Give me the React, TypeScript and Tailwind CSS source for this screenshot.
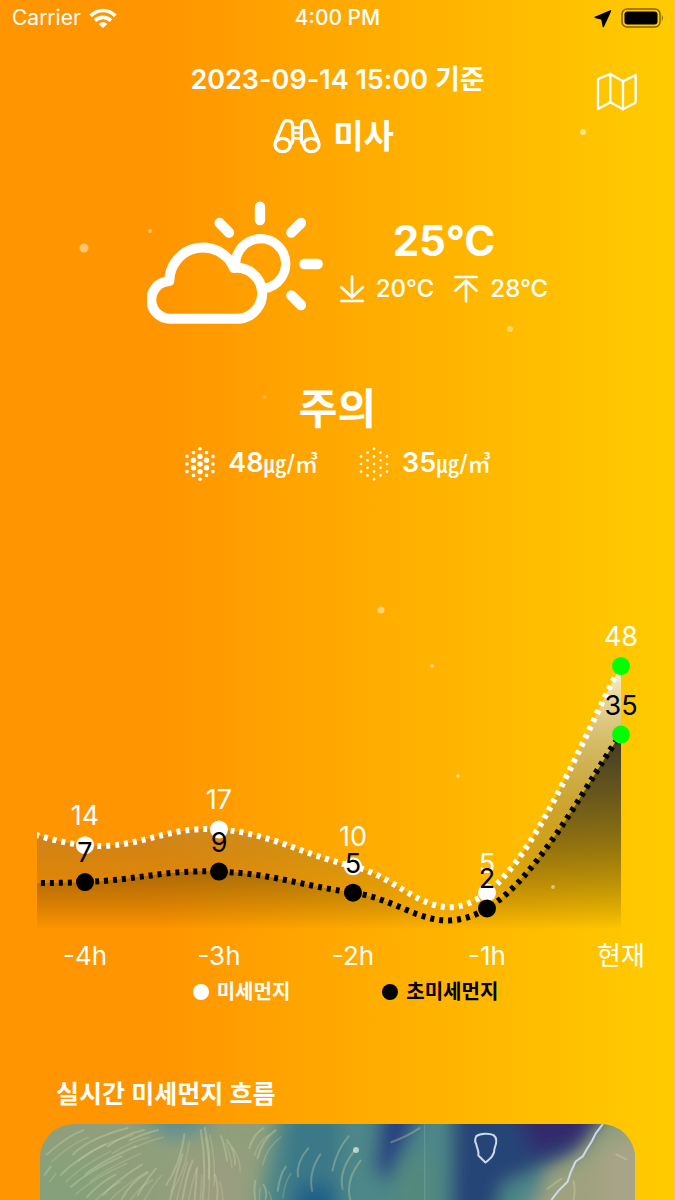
import { clsx } from "clsx"

const HOURS = ["-4h", "-3h", "-2h", "-1h", "현재"]
const PM10 = [14, 17, 10, 5, 48]
const PM25 = [7, 9, 5, 2, 35]

// values of the hour before the visible range, so the curves run off the left edge
const PM10_PREV = 22
const PM25_PREV = 7

const CHART_LEFT = 37
const CHART_RIGHT = 621
const BASE_Y = 319
const FILL_BOTTOM = 330

type Point = { x: number; y: number }

const toPoints = (values: number[]): Point[] =>
  values.map((v, i) => ({ x: -49 + i * 134, y: BASE_Y - v * 5.27 }))

function smoothPath(points: Point[]) {
  const tangent = (i: number) => {
    const a = points[Math.max(i - 1, 0)]
    const b = points[Math.min(i + 1, points.length - 1)]
    return { x: (b.x - a.x) * 0.2, y: (b.y - a.y) * 0.2 }
  }
  let d = `M${points[0].x} ${points[0].y}`
  for (let i = 1; i < points.length; i++) {
    const p = points[i - 1]
    const q = points[i]
    const tp = tangent(i - 1)
    const tq = tangent(i)
    d += ` C${p.x + tp.x} ${p.y + tp.y} ${q.x - tq.x} ${q.y - tq.y} ${q.x} ${q.y}`
  }
  return d
}

const PARTICLES = [
  { x: 583, y: 132, r: 3, o: 0.55 },
  { x: 84, y: 248, r: 4.5, o: 0.45 },
  { x: 150, y: 231, r: 2, o: 0.4 },
  { x: 510, y: 329, r: 3, o: 0.4 },
  { x: 265, y: 397, r: 2, o: 0.2 },
  { x: 381, y: 610, r: 3.5, o: 0.45 },
  { x: 432, y: 666, r: 2, o: 0.45 },
  { x: 458, y: 776, r: 2, o: 0.45 },
  { x: 553, y: 887, r: 2, o: 0.45 },
  { x: 356, y: 1150, r: 3, o: 0.6 },
]

function Particles() {
  return (
    <svg className="pointer-events-none absolute inset-x-0 top-0 w-full" viewBox="0 0 675 1200" aria-hidden="true">
      {PARTICLES.map((p) => (
        <circle key={`${p.x}-${p.y}`} cx={p.x} cy={p.y} r={p.r} fill="#fff" opacity={p.o} />
      ))}
    </svg>
  )
}

function StatusBar() {
  return (
    <div className="grid h-9 grid-cols-3 items-center px-3 text-[21px] leading-9">
      <div className="flex items-center gap-2">
        <span>Carrier</span>
        <svg className="h-5 w-7" viewBox="268 24 84 60" fill="none" stroke="currentColor" aria-hidden="true">
          <path d="M273 48C294 26 326 26 347 48" strokeWidth="11" />
          <path d="M286 62C300 49 320 49 334 62" strokeWidth="11" />
          <path d="M310 84L297 72C304 65 316 65 323 72Z" fill="currentColor" stroke="none" />
        </svg>
      </div>
      <span className="text-center font-medium">4:00 PM</span>
      <div className="flex items-center justify-end gap-2 text-black">
        <svg className="size-5" viewBox="780 26 56 56" aria-hidden="true">
          <path
            d="M829 34L786 52L805 57L809 78Z"
            fill="currentColor"
            stroke="currentColor"
            strokeWidth="4"
            strokeLinejoin="round"
          />
        </svg>
        <svg className="h-5 w-[42px]" viewBox="0 0 42 20" aria-hidden="true">
          <rect x="1" y="1" width="38" height="18" rx="5" fill="none" stroke="currentColor" strokeWidth="1.5" opacity=".5" />
          <rect x="3.5" y="3.5" width="33" height="13" rx="3" fill="currentColor" />
          <path d="M40.8 7C42.2 8 42.2 12 40.8 13Z" fill="currentColor" opacity=".5" />
        </svg>
      </div>
    </div>
  )
}

function MapIcon() {
  return (
    <svg
      className="h-10 w-11"
      viewBox="782 222 132 120"
      fill="none"
      stroke="currentColor"
      strokeWidth="7"
      strokeLinejoin="round"
      strokeLinecap="round"
      aria-hidden="true"
    >
      <path d="M791 247Q791 243 795 241L828 228L866 250L904 231V310Q904 314 900 316L866 334L828 313L791 333Z" />
      <path d="M828 228V313M866 250V334" />
    </svg>
  )
}

function BinocularsIcon() {
  return (
    <svg
      className="h-9 w-12"
      viewBox="36 52 144 108"
      fill="none"
      stroke="currentColor"
      strokeWidth="10"
      strokeLinecap="round"
      aria-hidden="true"
    >
      <ellipse cx="65" cy="133" rx="23" ry="20" />
      <ellipse cx="151" cy="133" rx="23" ry="20" />
      <path d="M44 122L64 74C67 64 72 60 79 60C91 60 96 66 95 78V122C94 126 92 130 87 133" />
      <path d="M172 122L152 74C149 64 144 60 137 60C125 60 120 66 121 78V122C122 126 124 130 129 133" />
      <path d="M97 81H119M97 97H119M97 113H119" strokeWidth="8" />
    </svg>
  )
}

function PartlyCloudyIcon() {
  return (
    <svg className="h-[125px] w-[177px]" viewBox="48 30 531 375" fill="none" stroke="currentColor" role="img" aria-label="구름 조금">
      <g strokeWidth="31" strokeLinecap="round">
        <path d="M387 50V90M266 99L294 128M510 99L481 128M520 222H560M481 316L510 345" />
      </g>
      <path d="M314 222A75 75 0 1 1 402 295" strokeWidth="28" />
      <path
        d="M120 386A56 56 0 0 1 115 273A101 101 0 0 1 309 234A76 76 0 1 1 325 386Z"
        strokeWidth="30"
        strokeLinejoin="round"
      />
    </svg>
  )
}

function LimitArrow({ up }: { up?: boolean }) {
  return (
    <svg
      className={clsx("h-7 w-6", up && "rotate-180")}
      viewBox="64 234 72 84"
      fill="none"
      stroke="currentColor"
      strokeWidth="8"
      strokeLinecap="round"
      strokeLinejoin="round"
      aria-hidden="true"
    >
      <path d="M100 239V300M68 271L100 301L132 271M68 312H132" />
    </svg>
  )
}

const DUST_COLUMNS = [3, 4, 5, 4, 3]

function DustIcon({ fine }: { fine?: boolean }) {
  return (
    <svg className="h-[34px] w-8" viewBox="-16 -17 32 34" fill="currentColor" aria-hidden="true">
      {DUST_COLUMNS.flatMap((count, c) =>
        Array.from({ length: count }, (_, r) => {
          const x = (c - 2) * 6.5
          const y = (r - (count - 1) / 2) * 7.6
          const inner = c > 0 && c < 4 && r > 0 && r < count - 1
          return <circle key={`${c}-${r}`} cx={x} cy={y} r={fine ? 1.3 : inner ? 2.7 : 1.8} />
        }),
      )}
    </svg>
  )
}

function DustValue({ value, fine }: { value: number; fine?: boolean }) {
  return (
    <div className="flex items-center gap-3">
      <DustIcon fine={fine} />
      <span className="text-[27px] leading-9 font-semibold">
        {value}
        <span className="text-[23px] font-medium">㎍/㎥</span>
      </span>
    </div>
  )
}

function Series({ values, prev, dark }: { values: number[]; prev: number; dark?: boolean }) {
  const points = toPoints([prev, ...values])
  const line = smoothPath(points)
  const color = dark ? "#000" : "#fff"
  const fillId = dark ? "fill-pm25" : "fill-pm10"
  const last = points.length - 1

  return (
    <g>
      <g clipPath="url(#plot)">
        <path d={`${line} V${FILL_BOTTOM} H${points[0].x} Z`} fill={`url(#${fillId})`} />
        <path d={line} fill="none" stroke={color} strokeWidth="6" strokeDasharray="4 5" />
      </g>
      {points.slice(1).map((p, i) => (
        <circle key={p.x} cx={p.x} cy={p.y} r="9" fill={i + 1 === last ? "#0f0" : color} />
      ))}
      {points.slice(1).map((p, i) => (
        <text key={p.x} x={p.x} y={p.y - 20} textAnchor="middle" fontSize="27" fill={color}>
          {values[i]}
        </text>
      ))}
    </g>
  )
}

function DustChart() {
  return (
    <svg className="w-full" viewBox="0 0 675 380" role="img" aria-label="시간별 미세먼지">
      <defs>
        <clipPath id="plot">
          <rect x={CHART_LEFT} y="0" width={CHART_RIGHT - CHART_LEFT} height="380" />
        </clipPath>
        <linearGradient id="fill-pm10" gradientUnits="userSpaceOnUse" x1="0" x2="0" y1="66" y2={FILL_BOTTOM}>
          <stop offset="0" stopColor="#fff" stopOpacity=".8" />
          <stop offset="1" stopColor="#000" stopOpacity="0" />
        </linearGradient>
        <linearGradient id="fill-pm25" gradientUnits="userSpaceOnUse" x1="0" x2="0" y1="135" y2={FILL_BOTTOM}>
          <stop offset="0" stopColor="#000" stopOpacity=".7" />
          <stop offset="1" stopColor="#000" stopOpacity="0" />
        </linearGradient>
      </defs>
      <Series values={PM10} prev={PM10_PREV} />
      <Series values={PM25} prev={PM25_PREV} dark />
      {HOURS.map((hour, i) => (
        <text key={hour} x={85 + i * 134} y="365" textAnchor="middle" fontSize="26" fill="#fff">
          {hour}
        </text>
      ))}
    </svg>
  )
}

function LegendItem({ label, dark }: { label: string; dark?: boolean }) {
  return (
    <li className={clsx("flex items-center gap-2", dark ? "text-black" : "text-white")}>
      <span className="size-4 rounded-full bg-current" />
      <span className="text-xl leading-6 font-semibold">{label}</span>
    </li>
  )
}

// wind streaks as short curves
const STREAKS = [
  "M8 50L14 42", "M10 30Q30 12 46 6", "M24 50Q40 34 68 20", "M36 30Q52 14 90 4", "M34 62Q52 46 84 32",
  "M48 50Q62 38 98 22", "M50 72Q62 58 78 50", "M66 70Q78 56 104 40", "M70 22Q88 10 106 6", "M84 74Q94 56 110 48",
  "M92 16Q110 8 120 6", "M100 70Q112 50 118 44", "M128 60Q142 40 146 10", "M132 74Q138 48 144 30", "M144 74Q148 50 154 36",
  "M156 74Q158 54 158 44", "M164 74Q168 40 162 6", "M170 54Q172 28 166 4", "M178 74Q180 62 176 50", "M188 36Q186 22 182 12",
  "M196 40Q196 26 188 16", "M210 24Q214 10 224 4", "M218 34Q222 16 236 6", "M216 76Q214 64 216 56", "M226 74Q228 66 224 60",
  "M238 66Q240 50 246 42", "M258 52Q256 38 268 24", "M272 66Q268 48 280 30", "M292 46Q296 26 308 12", "M302 64Q298 46 314 26",
  "M310 76Q304 56 320 36", "M350 18Q366 12 378 4", "M504 64Q512 58 518 54", "M530 74Q532 66 530 56", "M572 30L582 35",
]

function FlowMap() {
  return (
    <svg className="size-full" viewBox="0 0 594 75" preserveAspectRatio="xMidYMin slice" role="img" aria-label="미세먼지 흐름 지도">
      <defs>
        <filter id="soft" x="-50%" y="-50%" width="200%" height="200%">
          <feGaussianBlur stdDeviation="9" />
        </filter>
      </defs>
      <rect width="594" height="400" fill="#8f9f7c" />
      <g filter="url(#soft)">
        <path d="M-20 30H70V100H-20Z" fill="#87a07c" />
        <path d="M90 -20H170V4L132 16Z" fill="#5f9090" />
        <path d="M140 30H205V100H130Z" fill="#9a9d80" />
        <path d="M240 -20H500V100H215Z" fill="#4d8788" />
        <path d="M250 -10H300V100H240Z" fill="#3b7888" />
        <path d="M258 60H296V100H250Z" fill="#1f6089" />
        <path d="M340 -20H384L346 58L334 44Z" fill="#273f80" />
        <path d="M410 -20H570L530 30L460 60L450 110H408Z" fill="#284577" />
        <path d="M470 -20H560L538 20L490 30Z" fill="#302a6c" />
        <path d="M356 34H396V100H352Z" fill="#52897d" />
        <path d="M505 60L550 32L610 -10V100H475Z" fill="#a0a27f" />
        <path d="M560 20H610V100H560Z" fill="#a8a488" />
      </g>
      <g fill="none" stroke="#d5dcae" strokeWidth="2" strokeLinecap="round" opacity=".32">
        {STREAKS.map((d) => (
          <path key={d} d={d} />
        ))}
      </g>
      <g fill="none" stroke="#e9dfae" strokeWidth="1.5" strokeLinecap="round" opacity=".22" transform="translate(5 7)">
        {STREAKS.slice(0, 26).map((d) => (
          <path key={d} d={d} />
        ))}
      </g>
      <path d="M383 0V75" stroke="#9fc0c4" opacity=".3" />
      <g fill="none" stroke="#cdd9e8" strokeWidth="2" strokeLinejoin="round">
        <path d="M434 12C438 9 447 9 451 11C455 14 454 19 452 24C452 31 448 34 443 38L436 31C437 26 434 23 434 20C432 17 433 14 434 12Z" />
        <path d="M559 0L552 9L548 17L543 25L539 32L532 37L527 48L524 57L515 66L508 75" />
      </g>
    </svg>
  )
}

export default function App() {
  return (
    <main className="relative flex min-h-screen flex-col overflow-hidden bg-linear-to-r from-[#ff9500] from-23% to-[#ffcc00] font-[Inter,'Noto_Sans_CJK_KR',sans-serif] text-white">
      <StatusBar />

      <header className="grid grid-cols-[1fr_auto_1fr] items-start pt-6">
        <div className="col-start-2 flex flex-col items-center">
          <p className="text-[27px] leading-10 font-semibold">2023-09-14 15:00 기준</p>
          <h1 className="mt-3 flex items-center gap-3 pr-2 text-[33px] leading-12 font-semibold">
            <BinocularsIcon />
            미사
          </h1>
        </div>
        <button type="button" aria-label="지도" className="mt-3 mr-9 justify-self-end">
          <MapIcon />
        </button>
      </header>

      <section className="mt-10 flex items-center justify-center gap-4 pl-5">
        <PartlyCloudyIcon />
        <div className="flex flex-col items-center gap-3">
          <p className="text-[42px] leading-10 font-bold">25°C</p>
          <div className="flex items-center gap-5 text-2xl leading-8 font-medium">
            <span className="flex items-center gap-3">
              <LimitArrow />
              20°C
            </span>
            <span className="flex items-center gap-3">
              <LimitArrow up />
              28°C
            </span>
          </div>
        </div>
      </section>

      <section className="mt-14 flex flex-col items-center">
        <h2 className="text-[42px] leading-14 font-bold">주의</h2>
        <div className="mt-2 flex gap-10">
          <DustValue value={48} />
          <DustValue value={35} fine />
        </div>
      </section>

      <section className="mt-[118px]">
        <DustChart />
        <ul className="flex justify-center gap-23 pl-4">
          <LegendItem label="미세먼지" />
          <LegendItem label="초미세먼지" dark />
        </ul>
      </section>

      <section className="mt-18 flex flex-1 flex-col px-10">
        <h2 className="pl-4 text-[25px] leading-9 font-semibold">실시간 미세먼지 흐름</h2>
        <div className="mt-3 min-h-18 flex-1 basis-0 overflow-hidden rounded-t-[34px]">
          <FlowMap />
        </div>
      </section>

      <Particles />
    </main>
  )
}
